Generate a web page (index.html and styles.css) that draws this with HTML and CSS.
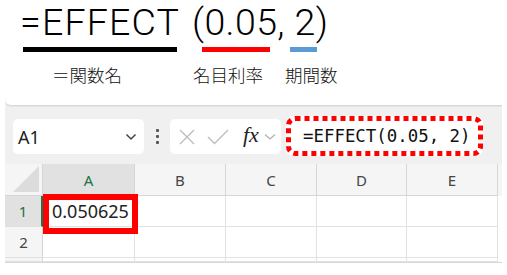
FILE: index.html
```html
<!DOCTYPE html>
<html lang="ja">
<head>
<meta charset="utf-8">
<link rel="stylesheet" href="styles.css">
</head>
<body>
<div class="top">
  <div class="title"><span class="t-fn">=EFFECT</span><span class="t-args">(0.05, 2)</span></div>
  <div class="bars">
    <span class="bar bar-black"></span>
    <span class="bar bar-red"></span>
    <span class="bar bar-blue"></span>
  </div>
  <div class="labels">
    <span class="lab lab1">＝関数名</span>
    <span class="lab lab2">名目利率</span>
    <span class="lab lab3">期間数</span>
  </div>
</div>

<div class="sheet">
  <div class="ribbon"></div>
  <div class="toolbar">
    <div class="namebox">
      <span class="nb-text">A1</span>
      <svg class="chev" width="12" height="8" viewBox="0 0 12 8"><path d="M1.5 1.5 L6 6 L10.5 1.5" fill="none" stroke="#444" stroke-width="1.5"/></svg>
    </div>
    <div class="dots"><i></i><i></i><i></i></div>
    <div class="fxbox">
      <svg class="ic-x" width="16" height="16" viewBox="0 0 16 16"><path d="M1 1 L15 15 M15 1 L1 15" stroke="#bdbdbd" stroke-width="1.4" fill="none"/></svg>
      <svg class="ic-check" width="22" height="16" viewBox="0 0 22 16"><path d="M1 8 L7.5 14.5 L21 1" stroke="#bdbdbd" stroke-width="1.4" fill="none"/></svg>
      <span class="fx">fx</span>
      <svg class="chev2" width="12" height="8" viewBox="0 0 12 8"><path d="M1 1.5 L6 6 L11 1.5" fill="none" stroke="#b0b0b0" stroke-width="1.3"/></svg>
    </div>
    <div class="formula">
      <span class="f-text">=EFFECT(0.05, 2)</span>
      <svg class="dotted" width="197" height="40" viewBox="0 0 197 40"><rect x="2.5" y="2.5" width="192" height="35" rx="7" ry="7" fill="none" stroke="#ff0000" stroke-width="5" stroke-dasharray="5 4"/></svg>
    </div>
  </div>
  <div class="grid">
    <div class="row hdr">
      <div class="rh corner"><span class="tri"></span></div>
      <div class="c ca sel">A</div>
      <div class="c cb">B</div>
      <div class="c cc">C</div>
      <div class="c cd">D</div>
      <div class="c ce">E</div>
    </div>
    <div class="row">
      <div class="rh rsel">1</div>
      <div class="c ca val">0.050625</div>
      <div class="c cb"></div>
      <div class="c cc"></div>
      <div class="c cd"></div>
      <div class="c ce"></div>
    </div>
    <div class="row">
      <div class="rh">2</div>
      <div class="c ca"></div>
      <div class="c cb"></div>
      <div class="c cc"></div>
      <div class="c cd"></div>
      <div class="c ce"></div>
    </div>
    <div class="row stub">
      <div class="rh"></div>
      <div class="c ca"></div>
      <div class="c cb"></div>
      <div class="c cc"></div>
      <div class="c cd"></div>
      <div class="c ce"></div>
    </div>
    <div class="selbox"></div>
  </div>
</div>
</body>
</html>
```

FILE: styles.css
```css
* { box-sizing: border-box; }
html, body { margin: 0; padding: 0; background: #fff; }
body { width: 507px; height: 275px; overflow: hidden; font-family: "Noto Sans CJK JP", "Noto Sans", sans-serif; color: #000; }

.top { height: 100px; }
.title {
  display: flex;
  padding-left: 20px;
  font-family: Roboto, "Liberation Sans", sans-serif;
  font-weight: 300;
  font-size: 37.5px;
  line-height: 44px;
  height: 42px;
  white-space: nowrap;
}
.t-fn { width: 172px; letter-spacing: 1.2px; }
.t-args { letter-spacing: 0.4px; }
.bars { display: flex; height: 5px; margin-top: 5px; }
.bar { display: block; height: 5px; }
.bar-black { margin-left: 23px; width: 154px; background: #000; }
.bar-red { margin-left: 25px; width: 68px; background: #ff0000; }
.bar-blue { margin-left: 20px; width: 27px; background: #5b9bd5; }
.labels { display: flex; margin-top: 12px; font-size: 17.5px; line-height: 22px; font-weight: 300; color: #111; white-space: nowrap; }
.lab1 { margin-left: 52px; width: 141px; }
.lab2 { width: 92px; }

.sheet { margin-left: 5px; width: 497px; background: #f0f0f0; position: relative; }
.ribbon { height: 6px; background: #fff; border-bottom: 1px solid #d8d8d8; border-bottom-left-radius: 6px; box-shadow: 0 1px 1px rgba(0,0,0,0.05); }
.toolbar { height: 58px; display: flex; align-items: center; padding-left: 8px; }
.namebox {
  width: 131px; height: 35px; background: #fff; border-radius: 5px;
  display: flex; align-items: center; justify-content: space-between;
  padding: 0 7px 0 5px; margin-top: 3px;
}
.nb-text { font-family: "Noto Sans", sans-serif; font-size: 18px; color: #222; }
.dots { display: flex; flex-direction: column; gap: 3px; margin-left: 12px; margin-top: 3px; width: 4px; }
.dots i { display: block; width: 3px; height: 3px; background: #555; border-radius: 1px; }
.fxbox {
  margin-left: 10px; width: 111px; height: 35px; background: #fff; border-radius: 5px; margin-top: 3px;
  display: flex; align-items: center; padding-left: 9px;
}
.ic-check { margin-left: 12px; }
.fx { font-family: "Liberation Serif", serif; font-style: italic; font-size: 22px; margin-left: 14px; color: #222; line-height: 1; margin-top: -3px; }
.chev2 { margin-left: 5px; }
.formula {
  margin-left: 5px; width: 197px; height: 40px; margin-top: 1px; position: relative;
  background: #fff; border-radius: 7px;
  display: flex; align-items: center; padding-left: 17px;
}
.f-text { font-family: "DejaVu Sans Mono", monospace; font-size: 17.4px; color: #111; }
.dotted { position: absolute; left: 0; top: 0; }

.grid { position: relative; background: #fff; border-bottom: 1px solid #d8d8d8; }
.row { display: flex; height: 31px; }
.row.hdr { height: 32px; background: #f5f5f5; }
.row.stub { height: 4px; }
.rh { width: 38px; flex: none; background: #f5f5f5; border-right: 1px solid #d6d6d6; border-bottom: 1px solid #e0e0e0; font-family: "Noto Sans", sans-serif; font-size: 15px; color: #444; display: flex; align-items: center; justify-content: center; }
.rh.rsel { background: #e1e1e1; color: #1e7145; border-right: 2px solid #1e7145; }
.corner { position: relative; border-bottom: 1px solid #d6d6d6; }
.tri { position: absolute; right: 3px; bottom: 3px; width: 0; height: 0; border-style: solid; border-width: 0 0 26px 26px; border-color: transparent transparent #dcdcdc transparent; }
.c { flex: none; border-right: 1px solid #e2e2e2; border-bottom: 1px solid #e2e2e2; font-family: "Noto Sans", sans-serif; }
.hdr .c { border-right: 1px solid #d6d6d6; border-bottom: 1px solid #d6d6d6; font-size: 15px; color: #444; display: flex; align-items: center; justify-content: center; }
.hdr .c.sel { background: #e1e1e1; color: #1e7145; }
.ca { width: 92px; }
.cb { width: 91px; }
.cc { width: 91px; }
.cd { width: 90px; }
.ce { width: 91px; }
.val { font-size: 18px; color: #222; display: flex; align-items: center; padding-left: 9px; }
.selbox { position: absolute; left: 38px; top: 30px; width: 95px; height: 40px; border: 6px solid #ff0000; }
```
